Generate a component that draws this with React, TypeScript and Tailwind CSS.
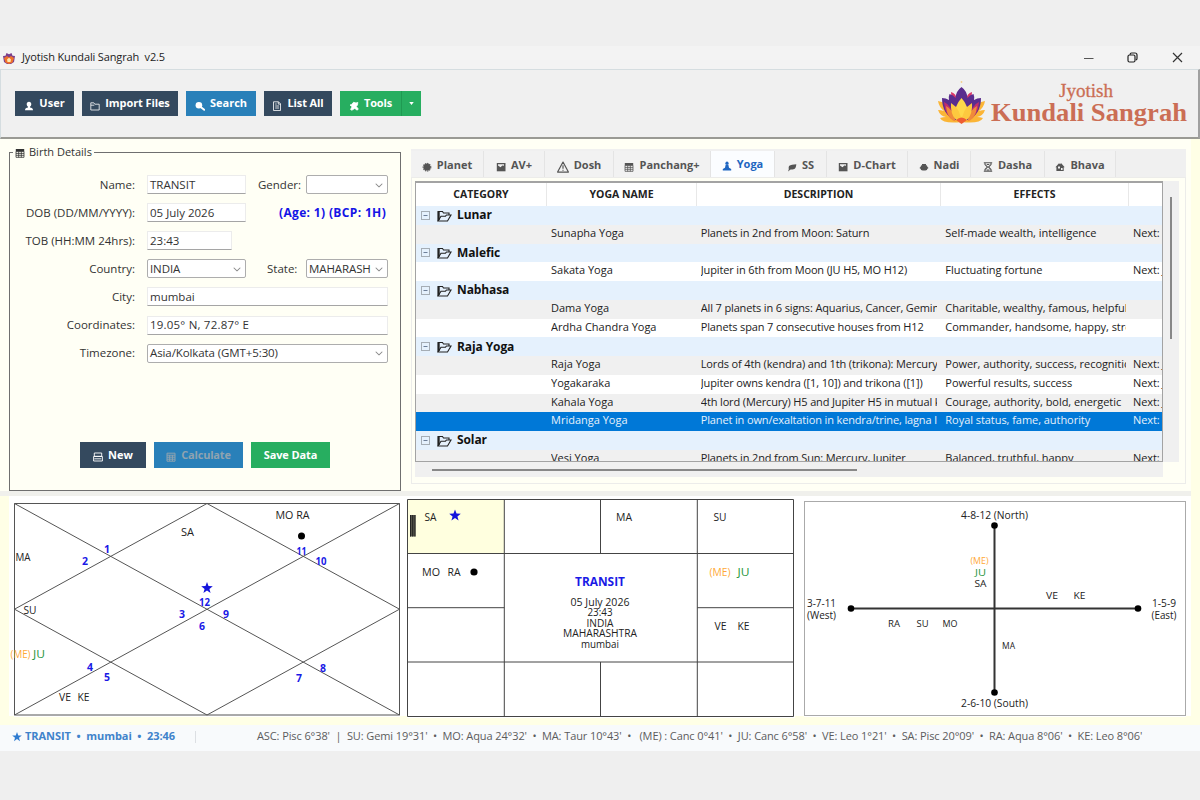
import type { ReactNode } from "react";
import clsx from "clsx";
import { FaChevronDown } from "react-icons/fa6";

type IconName =
  | "user"
  | "folder"
  | "search"
  | "doc"
  | "tools"
  | "card"
  | "calc"
  | "planet"
  | "chart"
  | "warn"
  | "calendar"
  | "yoga"
  | "leaf"
  | "nadi"
  | "hourglass"
  | "house";

const Icon = ({ name, className }: { name: IconName; className?: string }) => {
  const shapes: Record<IconName, ReactNode> = {
    user: (
      <path
        d="M5 .8c1.500 0 2.300 1.100 2.300 2.500 0 1.200-.6 2-1.300 2.500v.6c1.600.3 3 .8 3 2.800H1c0-2 1.400-2.500 3-2.800v-.6c-.7-.5-1.300-1.300-1.300-2.500C2.700 1.900 3.500.8 5 .8z"
        fill="currentColor"
      />
    ),
    folder: (
      <path d="M.8 9V1.800h3l1 1.400h4.400V9z M.8 4.200h3.500" fill="none" stroke="currentColor" strokeWidth=".8" />
    ),
    search: (
      <>
        <circle cx="3.900" cy="4.300" r="3.300" fill="currentColor" />
        <path d="M6 6.200l3.200 2.600" stroke="currentColor" strokeWidth="1.900" strokeLinecap="round" />
      </>
    ),
    doc: (
      <path
        d="M1.500.8h5l2 2v6.700h-7z M6.300.8v2.300h2.200 M3.200 3h1.500 M3.200 5h3.800 M3.200 7h3.800"
        fill="none"
        stroke="currentColor"
        strokeWidth=".8"
      />
    ),
    tools: (
      <path
        d="M1 4l1.700-.6L4.500 1.300 7 2l1.800-.6-.3 2.500L7.300 5.500 9.300 8 8.200 9.200 5.800 7.400 2.600 9.300 1.600 8.300l1.500-2.500z"
        fill="currentColor"
        stroke="currentColor"
        strokeWidth=".8"
        strokeLinejoin="round"
      />
    ),
    card: (
      <path d="M1.300 1h7.400v3.300H1.300z M.6 4.500h8.800V9H.6z M1.300 6.800h7" fill="none" stroke="currentColor" strokeWidth=".9" />
    ),
    calc: (
      <path
        d="M1 1.200h8v8H1z M1 3.200h8 M1 5.200h8 M1 7.200h8 M3.700 3v6 M6.400 3v6"
        fill="none"
        stroke="currentColor"
        strokeWidth="1"
      />
    ),
    planet: (
      <>
        <circle cx="5" cy="5.200" r="3.400" fill="currentColor" />
        <circle cx="5" cy="5.200" r="3.800" fill="none" stroke="currentColor" strokeWidth="1.100" strokeDasharray="1.400 .8" />
      </>
    ),
    chart: (
      <>
        <path d="M.8 1h8.700v8.300H.8z" fill="currentColor" />
        <path d="M2 2.300h6v1.500L6.300 3.400 4.500 5.200 2 3.500z" fill="#f0f0f0" />
      </>
    ),
    warn: (
      <path
        d="M5 .9L9.500 9.200H.5z M5 3.500v2.900 M5 7.200v1"
        fill="none"
        stroke="currentColor"
        strokeWidth="1"
        strokeLinejoin="round"
      />
    ),
    calendar: (
      <>
        <path d="M.8 1h8.400v2.400H.8z" fill="currentColor" />
        <path d="M1 3.400h8v5.900H1z M1 5.400h8 M1 7.300h8 M3.700 3.400v6 M6.300 3.400v6" fill="none" stroke="currentColor" strokeWidth=".8" />
      </>
    ),
    yoga: (
      <>
        <circle cx="5" cy="2.200" r="1.600" fill="currentColor" />
        <path d="M3.700 3.500h2.600l.7 3.200 2.200 1.200v1.500H.8V7.900L3 6.700z" fill="currentColor" />
      </>
    ),
    leaf: <path d="M2 4c1.800-1.300 4-1.700 7.300-1.800-.3 4.100-1.600 5.600-5.700 5.400L1 9.500 1.800 7.300C1.500 6.300 1.600 5 2 4z" fill="currentColor" />,
    nadi: (
      <>
        <rect x="1.500" y="3" width="7" height="5.500" rx="2.200" fill="currentColor" />
        <path d="M.8 5.800h8.400 M3 2.700h4" stroke="currentColor" strokeWidth="1.300" />
      </>
    ),
    hourglass: (
      <path
        d="M.8.8h8.400 M.8 9.300h8.400 M2 1v1.600L4.500 5 2 7.500V9 M8 1v1.600L5.500 5 8 7.500V9 M3.500 8h3 M3.700 2.500h2.600"
        fill="none"
        stroke="currentColor"
        strokeWidth="1.100"
      />
    ),
    house: (
      <>
        <path d="M.4 5.200L4 1.300l1.200 1 .8-1.200 3.700 4.100h-1v3.900H1.400V5.200z" fill="currentColor" />
        <path d="M3 4.500h2v2H3z M6 6h1.600v2H6z" fill="#f0f0f0" />
      </>
    ),
  };

  return (
    <svg viewBox="0 0 10 10" className={clsx("shrink-0", className)}>
      {shapes[name]}
    </svg>
  );
};

const TitleBar = () => (
  <div className="flex h-[23px] items-center bg-[#f3f3f3] pl-[3px] pr-[17px]">
    <svg viewBox="0 0 12 12" className="h-3 w-3">
      <path d="M0 4l2.500-.3L3.500 1 6 2.300 8.500 1l1 2.700L12 4l-1 6-3 2H4l-3-2z" fill="#7b3f8c" />
      <path d="M1 6l3-2 2 1.500L8 4l3 2-1.500 4.500L6 12l-3.500-1.500z" fill="#f0722b" />
      <path d="M4 7.500l2-1.800 2 1.800L7.500 10h-3z" fill="#ffe9b0" />
    </svg>
    <span className="ml-[7px] whitespace-pre text-[11px] tracking-[-0.14px] text-[#222]">
      Jyotish Kundali Sangrah{"  "}v2.5
    </span>
    <div className="ml-auto flex items-center">
      <svg viewBox="0 0 10 10" className="h-[10px] w-[10px]">
        <path d="M0 5.500h9.500" stroke="#555" strokeWidth="1" />
      </svg>
      <svg viewBox="0 0 11 11" className="ml-[33px] h-[11px] w-[11px]" fill="none" stroke="#222" strokeWidth="1.200">
        <rect x="1" y="3" width="7" height="7" rx="1.500" />
        <path d="M3.200 2.800V2.200Q3.200 1 4.500 1H8q2 0 2 2v3.500q0 1.300-1.200 1.400" />
      </svg>
      <svg viewBox="0 0 11 11" className="ml-[34px] h-[11px] w-[11px]" stroke="#333" strokeWidth="1.200">
        <path d="M1 1l9 9M10 1l-9 9" />
      </svg>
    </div>
  </div>
);

const ToolButton = ({
  icon,
  label,
  className,
}: {
  icon?: IconName;
  label: string;
  className: string;
}) => (
  <button
    className={clsx(
      "flex items-center justify-center gap-[5px] whitespace-nowrap text-[11px] font-bold",
      className
    )}
  >
    {icon && <Icon name={icon} className="mt-[4px] h-[10px] w-[10px]" />}
    <span>{label}</span>
  </button>
);

const Logo = () => (
  <svg width="252" height="52" viewBox="0 0 252 52" className="mt-px overflow-visible">
    <g transform="translate(1 6)">
      <path d="M23.500 38Q5 40 2 34q3-1 6-1-6-1-8-7 3 0 6 1Q1 23 0 17q8 1 12 8l11.500 9L35 25q4-7 12-8-1 6-6 10 3-1 6-1-2 6-8 7 3 0 6 1-3 6-21.500 4z" fill="#fbb536" />
      <path d="M13 8q5 1 6 8l-5 4z M34 8q-5 1-6 8l5 4z" fill="#d9386a" />
      <path
        d="M4 14q4 0 7 2-.5-4 .5-6 4 1 6 4Q18 7 23.500 3 29 7 29.500 14q2-3 6-4 1 2 .5 6 3-2 7-2 0 16-13 22H17Q4 30 4 14z"
        fill="#5a2d8e"
      />
      <path d="M6 18q8 3 11 19Q7 33 6 18z M41 18q-8 3-11 19 10-4 11-19z" fill="#c22d6d" />
      <path d="M8 22q8 4 9.500 15.500Q9 35 8 22z M39 22q-8 4-9.500 15.500Q38 35 39 22z" fill="#f08a3a" />
      <path d="M23.500 14q7.500 8 6.500 19l-6.500 6-6.500-6q-1-11 6.500-19z" fill="#ffd84a" />
      <path d="M13 19q10 6 10.500 20Q12 35 13 19z M34 19q-10 6-10.500 20Q35 35 34 19z" fill="#fdc93f" />
      <path d="M18 36q5.500-5 11 0l-5.500 4z" fill="#ee5d33" />
      <circle cx="23.500" cy="-2" r=".9" fill="#f3d08a" />
    </g>
    <text
      x="122"
      y="19"
      textLength="54"
      lengthAdjust="spacingAndGlyphs"
      className="fill-[#cb6e55] font-['Liberation_Serif',serif] text-[19px]"
      stroke="#cb6e55"
      strokeWidth=".3"
    >
      Jyotish
    </text>
    <text
      x="54"
      y="43"
      textLength="196"
      lengthAdjust="spacingAndGlyphs"
      className="fill-[#cb6e55] font-['Liberation_Serif',serif] text-[26px] font-bold"
    >
      Kundali Sangrah
    </text>
  </svg>
);

const Toolbar = () => (
  <div className="flex h-[70px] items-center border-b-2 border-l border-r-2 border-t border-b-[#9a9a94] border-l-[#d5dde0] border-r-[#a0a0a0] border-t-[#d5dde0] bg-[#f0f0f0] pl-[14px] pr-[9px] text-white">
    <div className="flex gap-2">
      <ToolButton icon="user" label="User" className="h-[25px] w-[59px] bg-[#34495e]" />
      <ToolButton icon="folder" label="Import Files" className="h-[25px] w-[96px] bg-[#34495e] tracking-[-0.1px]" />
      <ToolButton icon="search" label="Search" className="h-[25px] w-[70px] bg-[#2980b9]" />
      <ToolButton icon="doc" label="List All" className="h-[25px] w-[68px] bg-[#34495e] tracking-[-0.1px]" />
      <div className="flex">
        <ToolButton icon="tools" label="Tools" className="h-[25px] w-[61px] bg-[#27ae60] tracking-[-0.2px]" />
        <button className="flex h-[25px] w-[20px] items-center justify-center border-l border-[#1f9a52] bg-[#27ae60]">
          <svg viewBox="0 0 6 4" className="h-[3px] w-[5px]">
            <path d="M0 0h6L3 4z" fill="#fff" />
          </svg>
        </button>
      </div>
    </div>
    <div className="ml-auto">
      <Logo />
    </div>
  </div>
);

const Field = ({ value, className }: { value: string; className: string }) => (
  <div
    className={clsx(
      "flex h-[19px] items-center border border-b-[#a5a5a5] border-[#ececec] bg-white pl-[2px] text-[11.5px] whitespace-nowrap",
      className
    )}
  >
    {value}
  </div>
);

const Dropdown = ({ value, className }: { value: string; className: string }) => (
  <div
    className={clsx(
      "flex h-[19px] items-center justify-between rounded-[2px] border border-[#adadad] bg-white pl-[2px] pr-[4px] text-[11.5px] tracking-[-0.1px] whitespace-nowrap",
      className
    )}
  >
    <span>{value}</span>
    <FaChevronDown className="h-2 w-2 text-[#888]" />
  </div>
);

const FormRow = ({ label, children }: { label: string; children: ReactNode }) => (
  <div className="flex h-[28.1px] items-center">
    <span className="mr-3 w-[125px] text-right">{label}</span>
    {children}
  </div>
);

const BirthDetails = () => (
  <fieldset className="ml-[9px] mt-[7px] h-[345px] w-[392px] border border-[#6f6f6f] text-[11.5px] text-[#333]">
    <legend className="ml-[3px] flex h-3 items-center bg-[#fffff5] px-[2px] text-[11px]">
      <Icon name="calendar" className="mr-[4px] mt-px h-[10px] w-[10px] text-[#333]" />
      Birth Details
    </legend>
    <div className="mt-[12.5px]">
      <FormRow label="Name:">
        <Field value="TRANSIT" className="w-[99px]" />
        <span className="ml-[12px] w-[43px]">Gender:</span>
        <Dropdown value="" className="ml-[5px] w-[82px]" />
      </FormRow>
      <FormRow label="DOB (DD/MM/YYYY):">
        <Field value="05 July 2026" className="w-[99px]" />
        <span className="ml-[33px] text-[12px] font-bold tracking-[0.35px] text-[#1414e6]">(Age: 1) (BCP: 1H)</span>
      </FormRow>
      <FormRow label="TOB (HH:MM 24hrs):">
        <Field value="23:43" className="w-[85px]" />
      </FormRow>
      <FormRow label="Country:">
        <Dropdown value="INDIA" className="w-[99px]" />
        <span className="ml-[21px] w-[34px]">State:</span>
        <Dropdown value="MAHARASH" className="ml-[5px] w-[82px]" />
      </FormRow>
      <FormRow label="City:">
        <Field value="mumbai" className="w-[241px]" />
      </FormRow>
      <FormRow label="Coordinates:">
        <Field value="19.05° N, 72.87° E" className="w-[241px] tracking-[0.2px]" />
      </FormRow>
      <FormRow label="Timezone:">
        <Dropdown value="Asia/Kolkata (GMT+5:30)" className="w-[241px]" />
      </FormRow>
    </div>
    <div className="ml-[70px] mt-[75px] flex gap-2 text-white">
      <ToolButton icon="card" label="New" className="h-[26px] w-[66px] bg-[#34495e]" />
      <ToolButton icon="calc" label="Calculate" className="h-[26px] w-[89px] bg-[#2980b9] tracking-[-0.2px] text-[#8fa3b0]!" />
      <ToolButton label="Save Data" className="h-[26px] w-[79px] bg-[#27ae60] tracking-[-0.1px]" />
    </div>
  </fieldset>
);

const tabs: { icon: IconName; label: string; width: string; active?: boolean }[] = [
  { icon: "planet", label: "Planet", width: "w-[73px]" },
  { icon: "chart", label: "AV+", width: "w-[61px]" },
  { icon: "warn", label: "Dosh", width: "w-[69px]" },
  { icon: "calendar", label: "Panchang+", width: "w-[97px]" },
  { icon: "yoga", label: "Yoga", width: "w-[64px]", active: true },
  { icon: "leaf", label: "SS", width: "w-[52px]" },
  { icon: "chart", label: "D-Chart", width: "w-[81px]" },
  { icon: "nadi", label: "Nadi", width: "w-[63px]" },
  { icon: "hourglass", label: "Dasha", width: "w-[74px]" },
  { icon: "house", label: "Bhava", width: "w-[71px]" },
];

type Row = { group: string } | { name: string; desc: string; effects: string; next: string; state: "odd" | "even" | "selected" };

const rows: Row[] = [
  { group: "Lunar" },
  { name: "Sunapha Yoga", desc: "Planets in 2nd from Moon: Saturn", effects: "Self-made wealth, intelligence", next: "Next: S", state: "odd" },
  { group: "Malefic" },
  { name: "Sakata Yoga", desc: "Jupiter in 6th from Moon (JU H5, MO H12)", effects: "Fluctuating fortune", next: "Next: J", state: "even" },
  { group: "Nabhasa" },
  { name: "Dama Yoga", desc: "All 7 planets in 6 signs: Aquarius, Cancer, Gemin", effects: "Charitable, wealthy, famous, helpful", next: "", state: "odd" },
  { name: "Ardha Chandra Yoga", desc: "Planets span 7 consecutive houses from H12", effects: "Commander, handsome, happy, stro", next: "", state: "even" },
  { group: "Raja Yoga" },
  { name: "Raja Yoga", desc: "Lords of 4th (kendra) and 1th (trikona): Mercury", effects: "Power, authority, success, recognitio", next: "Next: J", state: "odd" },
  { name: "Yogakaraka", desc: "Jupiter owns kendra ([1, 10]) and trikona ([1])", effects: "Powerful results, success", next: "Next: J", state: "even" },
  { name: "Kahala Yoga", desc: "4th lord (Mercury) H5 and Jupiter H5 in mutual k", effects: "Courage, authority, bold, energetic", next: "Next: J", state: "odd" },
  { name: "Mridanga Yoga", desc: "Planet in own/exaltation in kendra/trine, lagna lo", effects: "Royal status, fame, authority", next: "Next:", state: "selected" },
  { group: "Solar" },
  { name: "Vesi Yoga", desc: "Planets in 2nd from Sun: Mercury, Jupiter", effects: "Balanced, truthful, happy", next: "Next:", state: "odd" },
];

const GroupRow = ({ label }: { label: string }) => (
  <div className="flex h-[18.75px] shrink-0 items-center bg-[#e5f1fd] pl-[5px]">
    <svg viewBox="0 0 9 9" className="h-[9px] w-[9px]" fill="none" stroke="#a5adb5">
      <rect x=".5" y=".5" width="8" height="8" />
      <path d="M2.500 4.500h4" stroke="#6d7f99" />
    </svg>
    <svg viewBox="0 0 15 12" className="ml-[7px] mt-px h-[12px] w-[15px]" fill="none" stroke="#222" strokeWidth="1.100">
      <path d="M1 11V1.500h4.500l1 1.500H12v2" />
      <path d="M1 11h9.500L14 5H9.500L8.500 6.200H4z" />
      <path d="M1.800 2v8" strokeWidth="1.800" />
    </svg>
    <span className="ml-[5px] text-[12px] font-bold tracking-[-0.1px] text-[#111]">{label}</span>
  </div>
);

const YogaTable = () => (
  <div className="flex h-[281px] w-[748px] flex-col overflow-hidden border border-t-2 border-[#a3a3a3] bg-white">
    <div className="flex h-[23px] shrink-0 text-center text-[10.5px] font-bold leading-[22px] text-[#222]">
      <span className="w-[131px] border-r border-[#e8e8e8]">CATEGORY</span>
      <span className="w-[150px] border-r border-[#e8e8e8]">YOGA NAME</span>
      <span className="w-[244px] border-r border-[#e8e8e8]">DESCRIPTION</span>
      <span className="w-[188px] border-r border-[#e8e8e8]">EFFECTS</span>
    </div>
    {rows.map((row, i) =>
      "group" in row ? (
        <GroupRow key={i} label={row.group} />
      ) : (
        <div
          key={i}
          className={clsx(
            "flex h-[18.75px] shrink-0 items-center pb-[2px] pl-[135px] text-[11px] whitespace-nowrap",
            row.state === "odd" && "bg-[#f0f0f0] text-[#222]",
            row.state === "even" && "bg-white text-[#222]",
            row.state === "selected" && "bg-[#0078d7] text-[#e6f1fb]"
          )}
        >
          <span className="w-[150px] overflow-hidden">{row.name}</span>
          <span className="mr-[8px] w-[237px] overflow-hidden tracking-[-0.14px]">{row.desc}</span>
          <span className="mr-[7px] w-[181px] overflow-hidden tracking-[-0.05px]">{row.effects}</span>
          <span className="w-[29px] overflow-hidden tracking-[-0.1px]">{row.next}</span>
        </div>
      )
    )}
  </div>
);

const Notebook = () => (
  <div className="ml-[10px] mt-[10px] h-[335px] w-[775px]">
    <div className="flex h-[28px] bg-[#f0f0f0] pt-[2px]">
      {tabs.map((tab) => (
        <div
          key={tab.label}
          className={clsx(
            "flex items-center justify-center gap-[5px] border-r border-[#e4e4e4] text-[11px] font-bold whitespace-nowrap",
            tab.width,
            tab.active ? "bg-[#fbfdff] text-[#1f66c1]" : "bg-[#f2f2f2] pt-[2px] text-[#555]"
          )}
        >
          <Icon name={tab.icon} className={clsx("mt-[3px]", tab.icon === "warn" ? "h-[12px] w-[12px]" : "h-[10px] w-[10px]")} />
          {tab.label}
        </div>
      ))}
    </div>
    <div className="h-[307px] border border-[#ececea] pl-[3px] pt-[3px]">
      <div className="flex">
        <YogaTable />
        <div className="flex h-[281px] w-[16px] justify-center bg-[#f0f0f0]">
          <div className="mt-[16px] h-[142px] w-[2px] bg-[#888]" />
        </div>
      </div>
      <div className="h-[15px] w-[748px] bg-[#f0f0f0] pl-[17px] pt-[7px]">
        <div className="h-[2px] w-[425px] bg-[#888]" />
      </div>
    </div>
  </div>
);

const BLUE = "#1a1ae6";
const ORANGE = "#ffa937";
const GREEN = "#27963c";

type Label = { x: number; y: number; text: string; w?: number; color?: string; bold?: boolean; size?: number };

const ChartText = ({ x, y, text, w, color = "#222", bold, size = 10.5 }: Label) => (
  <text
    x={x}
    y={y}
    fill={color}
    fontSize={size}
    fontWeight={bold ? 700 : 400}
    textAnchor="middle"
    dominantBaseline="central"
    textLength={w}
    lengthAdjust="spacingAndGlyphs"
  >
    {text}
  </text>
);

const Star = ({ x, y }: { x: number; y: number }) => (
  <path
    transform={`translate(${x} ${y})`}
    d="M0-6L1.500-1.900 5.800-1.800 2.400.9 3.600 5 0 2.500-3.600 5-2.400.9-5.800-1.800-1.500-1.900z"
    fill="#1414dc"
  />
);

const northLabels: Label[] = [
  { x: 93, y: 46, text: "1", bold: true, color: BLUE },
  { x: 71, y: 58, text: "2", bold: true, color: BLUE },
  { x: 168, y: 111, text: "3", bold: true, color: BLUE },
  { x: 76, y: 164, text: "4", bold: true, color: BLUE },
  { x: 93, y: 174, text: "5", bold: true, color: BLUE },
  { x: 188, y: 123, text: "6", bold: true, color: BLUE },
  { x: 285, y: 175, text: "7", bold: true, color: BLUE },
  { x: 309, y: 165, text: "8", bold: true, color: BLUE },
  { x: 212, y: 111, text: "9", bold: true, color: BLUE },
  { x: 307, y: 58, text: "10", bold: true, color: BLUE, w: 11 },
  { x: 287.5, y: 48, text: "11", bold: true, color: BLUE, w: 10 },
  { x: 190.5, y: 99, text: "12", bold: true, color: BLUE, w: 11 },
  { x: 173.5, y: 29, text: "SA", w: 13 },
  { x: 278.5, y: 12, text: "MO RA", w: 34 },
  { x: 9, y: 54, text: "MA", w: 15 },
  { x: 16, y: 107, text: "SU", w: 13 },
  { x: 6.5, y: 151, text: "(ME)", w: 20, color: ORANGE },
  { x: 25, y: 151, text: "JU", w: 12, color: GREEN },
  { x: 51, y: 194, text: "VE", w: 12 },
  { x: 69.5, y: 194, text: "KE", w: 12 },
];

const NorthChart = () => (
  <svg width="386" height="214" viewBox="0 0 386 214" className="mt-[2px] ml-[14px] shrink-0 overflow-visible bg-white">
    <path
      d="M.5.5h385v211.500H.5zL385.500 212M385.500.5L.5 212M193 .5L385.500 106.200 193 212 .5 106.200z"
      fill="none"
      stroke="#555"
      strokeWidth="1"
    />
    {northLabels.map((label) => (
      <ChartText key={label.text} {...label} />
    ))}
    <circle cx="287.500" cy="33" r="3.500" fill="#000" />
    <Star x={193} y={85} />
  </svg>
);

const southLabels: Label[] = [
  { x: 23.5, y: 18, text: "SA", w: 12 },
  { x: 217, y: 18, text: "MA", w: 16 },
  { x: 313, y: 18, text: "SU", w: 13 },
  { x: 24, y: 72.5, text: "MO", w: 18 },
  { x: 47, y: 72.5, text: "RA", w: 13 },
  { x: 313, y: 72.5, text: "(ME)", w: 21, color: ORANGE },
  { x: 336.5, y: 72.5, text: "JU", w: 12, color: GREEN },
  { x: 313.5, y: 127, text: "VE", w: 12 },
  { x: 336.5, y: 127, text: "KE", w: 12 },
  { x: 193, y: 82, text: "TRANSIT", w: 50, bold: true, color: BLUE, size: 12 },
  { x: 193, y: 102.5, text: "05 July 2026", w: 59 },
  { x: 193, y: 113, text: "23:43", w: 25 },
  { x: 193, y: 123.5, text: "INDIA", w: 27 },
  { x: 193, y: 134, text: "MAHARASHTRA", w: 74 },
  { x: 193, y: 144.5, text: "mumbai", w: 38 },
];

const SouthChart = () => (
  <svg width="388" height="219" viewBox="0 0 388 219" className="ml-[7px] -mt-[2px] shrink-0 bg-white">
    <rect x=".5" y=".5" width="96.500" height="54" fill="#ffffdf" />
    <path
      d="M.5.5h386v217H.5zM97.300.5V217.500M290.300.5V217.500M193.500.5V54.500M193.500 163V217.500M.5 54.500H387M.5 163H387M.5 108.700H97.300M290.300 108.700H387"
      fill="none"
      stroke="#444"
      strokeWidth="1"
    />
    <path d="M3 16h5.500v21.500H3z" fill="#55554a" />
    <path d="M3.500 16v21.500M5.700 16v21.500M8 16v21.500" stroke="#222" strokeWidth="1" />
    {southLabels.map((label) => (
      <ChartText key={label.text} {...label} />
    ))}
    <circle cx="67" cy="73" r="3.600" fill="#000" />
    <Star x={48} y={16.5} />
  </svg>
);

const compassLabels: Label[] = [
  { x: 190.5, y: 13.5, text: "4-8-12 (North)", w: 67 },
  { x: 190.5, y: 202, text: "2-6-10 (South)", w: 67 },
  { x: 17.5, y: 101.5, text: "3-7-11", w: 29 },
  { x: 17.5, y: 114, text: "(West)", w: 29 },
  { x: 360, y: 101.5, text: "1-5-9", w: 24 },
  { x: 360, y: 114, text: "(East)", w: 25 },
  { x: 175.5, y: 59.5, text: "(ME)", w: 18, color: ORANGE, size: 9.5 },
  { x: 176.5, y: 71, text: "JU", w: 11, color: GREEN, size: 9.5 },
  { x: 176.5, y: 82, text: "SA", w: 12, size: 9.5 },
  { x: 248, y: 94, text: "VE", w: 12, size: 9.5 },
  { x: 275.5, y: 94, text: "KE", w: 12, size: 9.5 },
  { x: 90, y: 122, text: "RA", w: 12, size: 9.5 },
  { x: 118.5, y: 122, text: "SU", w: 12, size: 9.5 },
  { x: 146, y: 122, text: "MO", w: 15, size: 9.5 },
  { x: 204.5, y: 144, text: "MA", w: 13, size: 9.5 },
];

const CompassChart = () => (
  <svg width="382" height="216" viewBox="0 0 382 216" className="ml-[9px] shrink-0 bg-white">
    <rect x=".5" y=".5" width="381" height="214" fill="none" stroke="#aaa" />
    <path d="M47 107.500H334M190.500 24V191" stroke="#333" strokeWidth="2" />
    {[
      [47, 107.5],
      [334, 107.5],
      [190.5, 24.5],
      [190.5, 191.5],
    ].map(([cx, cy]) => (
      <circle key={`${cx}-${cy}`} cx={cx} cy={cy} r="3.300" fill="#000" />
    ))}
    {compassLabels.map((label) => (
      <ChartText key={label.text} {...label} />
    ))}
  </svg>
);

const positions = [
  "SU: Gemi 19°31'",
  "MO: Aqua 24°32'",
  "MA: Taur 10°43'",
  " (ME) : Canc 0°41'",
  "JU: Canc 6°58'",
  "VE: Leo 1°21'",
  "SA: Pisc 20°09'",
  "RA: Aqua 8°06'",
  "KE: Leo 8°06'",
];

const StatusBar = () => (
  <div className="flex h-[26px] items-center bg-[#f8fafc] pb-[3px] pl-[12px] text-[11px] whitespace-pre">
    <svg viewBox="-6 -6 12 12" className="mr-[3px] h-[10px] w-[10px]">
      <path d="M0-6L1.500-1.900 5.800-1.800 2.400.9 3.600 5 0 2.500-3.600 5-2.400.9-5.800-1.800-1.500-1.900z" fill="#2f7bd0" />
    </svg>
    <span className="w-[170px] font-bold tracking-[-0.05px] text-[#3f83cb]">TRANSIT  •  mumbai  •  23:46</span>
    <span className="h-3 w-[62px] border-l border-[#dcdfe3]" />
    <span className="tracking-[-0.1px] text-[#5c5c5c]">ASC: Pisc 6°38'  |  {positions.join("  •  ")}</span>
  </div>
);

export default function App() {
  return (
    <div className="h-[800px] w-[1200px] overflow-hidden bg-[#efefef] pt-[46px] font-['Open_Sans','Noto_Sans',sans-serif]">
      <TitleBar />
      <Toolbar />
      <div className="h-[586px] bg-[#ffffe6] pr-[9px]">
        <div className="h-[577px] bg-[#fffff5]">
          <div className="flex h-[352px]">
            <div className="w-[401px] shrink-0">
              <BirthDetails />
            </div>
            <Notebook />
          </div>
          <div className="h-[5px] bg-[#f0f0ec]" />
          <div className="flex h-[220px] bg-gradient-to-r from-[#ffffe6] from-[9px] to-white to-[9px] pt-[5px]">
            <NorthChart />
            <SouthChart />
            <CompassChart />
          </div>
        </div>
      </div>
      <StatusBar />
    </div>
  );
}
